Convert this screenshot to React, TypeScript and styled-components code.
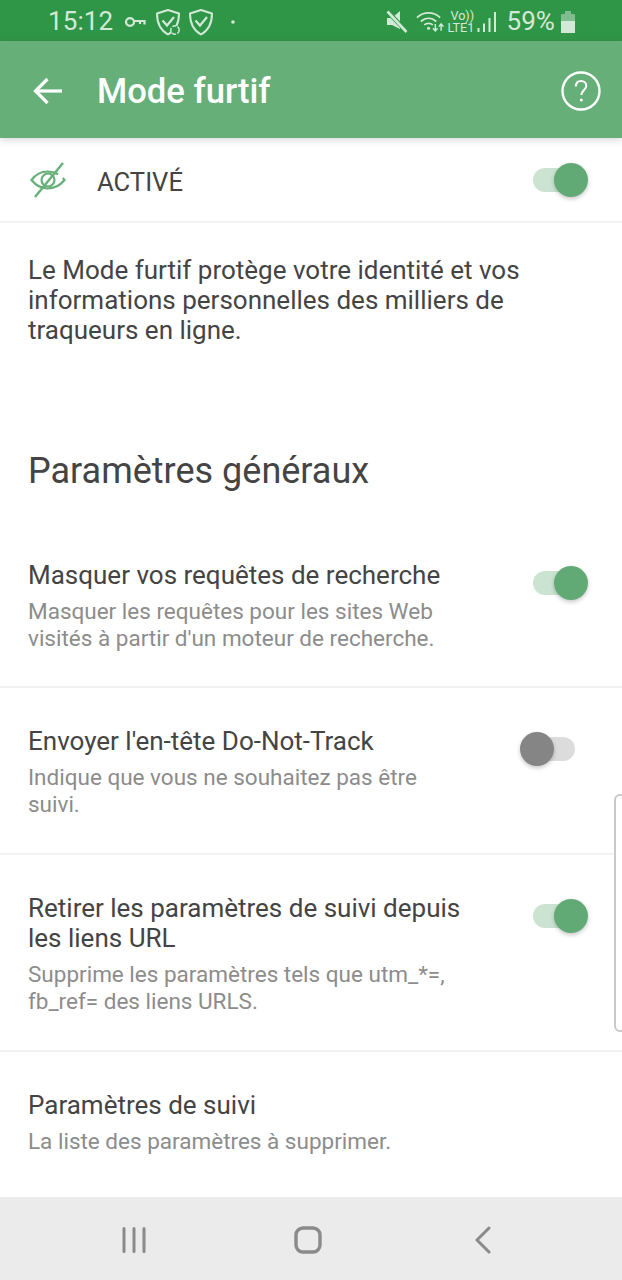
import React from "react";
import styled, { createGlobalStyle } from "styled-components";

const Global = createGlobalStyle`
  html, body { margin: 0; padding: 0; background: #fff; }
  * { box-sizing: border-box; }
  #root { width: 622px; height: 1280px; overflow: hidden; }
`;

const Screen = styled.div`
  position: relative;
  width: 622px;
  height: 1280px;
  display: flex;
  flex-direction: column;
  background: #fff;
  font-family: Roboto, "Liberation Sans", sans-serif;
  overflow: hidden;
`;

const StatusBar = styled.div`
  height: 41px;
  flex: none;
  background: #309647;
  color: #d3e9d7;
  display: flex;
  align-items: center;
  padding: 2px 47px 0 48px;
`;

const StatusText = styled.span`
  font-size: 26px;
  line-height: 39px;
  letter-spacing: 0.1px;
  height: 39px;
`;

const StatusGroup = styled.div`
  display: flex;
  align-items: center;
`;

const Spacer = styled.div`
  flex: 1;
`;

const Icon = styled.svg<{ $ml?: number; $mr?: number }>`
  flex: none;
  margin-left: ${(p) => p.$ml ?? 0}px;
  margin-right: ${(p) => p.$mr ?? 0}px;
`;

const AppBar = styled.div`
  height: 97px;
  flex: none;
  background: #67af79;
  display: flex;
  align-items: center;
  padding: 2px 21px 0 33px;
  box-shadow: 0 2px 8px rgba(0, 0, 0, 0.16);
  position: relative;
  z-index: 1;
`;

const Title = styled.h1`
  margin: 0 0 0 34px;
  font-size: 34.6px;
  font-weight: 500;
  color: #fff;
  flex: 1;
`;

const Content = styled.div`
  flex: 1;
  min-height: 0;
`;

const MasterRow = styled.div`
  height: 85px;
  display: flex;
  align-items: center;
  padding: 0 34px 0 30px;
  border-bottom: 2px solid #f2f2f2;
`;

const MasterLabel = styled.span`
  margin: 4px 0 0 31px;
  font-size: 25.6px;
  color: #444;
  flex: 1;
`;

const Intro = styled.p`
  margin: 0;
  padding: 32px 28px 0;
  font-size: 26px;
  line-height: 30px;
  color: #444;
`;

const SectionTitle = styled.h2`
  margin: 104px 0 29px;
  padding: 0 28px;
  font-size: 36px;
  line-height: 44px;
  font-weight: 400;
  color: #444;
`;

const Item = styled.div<{ $last?: boolean; $minH: number }>`
  display: flex;
  align-items: flex-start;
  min-height: ${(p) => p.$minH}px;
  padding: 38px 34px 0 28px;
  border-bottom: ${(p) => (p.$last ? "none" : "2px solid #f2f2f2")};
`;

const ItemBody = styled.div`
  flex: 1;
  min-width: 0;
  max-width: 460px;
`;

const ItemTitle = styled.div`
  font-size: 26px;
  line-height: 30px;
  color: #444;
`;

const ItemSub = styled.div`
  margin-top: 8px;
  font-size: 22.5px;
  line-height: 26.5px;
  color: #8c8c8c;
`;

const SwitchBox = styled.div`
  margin-left: auto;
  flex: none;
  position: relative;
  width: 55px;
  height: 34px;
  margin-top: 6px;
`;

const MasterSwitch = styled(SwitchBox)`
  margin-top: 0;
`;

const Track = styled.div<{ $on: boolean }>`
  position: absolute;
  top: 5px;
  left: 0;
  height: 24px;
  width: 42px;
  border-radius: 12px;
  background: ${(p) => (p.$on ? "#cbe4d1" : "#dcdcdc")};
`;

const Thumb = styled.div<{ $on: boolean }>`
  position: absolute;
  top: 0;
  left: ${(p) => (p.$on ? 21 : -13)}px;
  width: 34px;
  height: 34px;
  border-radius: 50%;
  background: ${(p) => (p.$on ? "#61aa75" : "#858585")};
  box-shadow: 0 2px 4px rgba(0, 0, 0, 0.22);
`;

const NavBar = styled.div`
  height: 83px;
  flex: none;
  background: #ebebeb;
  display: flex;
  align-items: center;
  padding: 2px 0 0 121px;
`;

const EdgeHandle = styled.div`
  position: absolute;
  right: -4px;
  top: 794px;
  width: 12px;
  height: 238px;
  border: 2px solid #c9c9c9;
  border-radius: 9px;
  background: #fff;
`;

const VolteBox = styled.div`
  margin-left: 3px;
  width: 26px;
  color: #d3e9d7;
  font-size: 12.6px;
  line-height: 12px;
  white-space: nowrap;
`;

const VolteLine = styled.div<{ $pad?: number }>`
  padding-left: ${(p) => p.$pad ?? 0}px;
`;

const Toggle = ({ on }: { on: boolean }) => (
  <SwitchBox>
    <Track $on={on} />
    <Thumb $on={on} />
  </SwitchBox>
);

const Key = () => (
  <Icon $ml={12} width="21" height="12" viewBox="0 0 21 12" fill="none" stroke="#d3e9d7" strokeWidth="2.200">
    <ellipse cx="5" cy="6" rx="4" ry="3.800" />
    <path d="M9 5h10.5v3.5M15 5v3" />
  </Icon>
);

const Shield = ({ sync, ml }: { sync?: boolean; ml: number }) => (
  <Icon $ml={ml} width="26" height="28" viewBox="0 0 26 28" fill="none" stroke="#d3e9d7" strokeWidth="2">
    <path d="M13 2 L24 5.5 C24 15 21 22 13 26.5 C5 22 2 15 2 5.5 Z" strokeLinejoin="round" />
    <path d="M7.5 12.5 L12 17.5 L19 9" strokeWidth="2.2" />
    {sync && <circle cx="20" cy="22" r="4.2" fill="#309647" strokeWidth="1.5" strokeDasharray="4 1.5" />}
  </Icon>
);

const Mute = () => (
  <Icon width="22" height="24" viewBox="0 0 22 24">
    <path d="M1 8h5L14 1V19L6 15H1Z" fill="#d3e9d7" />
    <path d="M2 2 L21 22" stroke="#309647" strokeWidth="4.500" />
    <path d="M1.500 1.500 L20.500 22" stroke="#d3e9d7" strokeWidth="2.600" />
  </Icon>
);

const Wifi = () => (
  <Icon $ml={8} width="28" height="24" viewBox="0 0 29 24" fill="none" stroke="#d3e9d7" strokeWidth="1.8">
    <path d="M1 7.5C8 1 18 1 25 7.5" />
    <path d="M5 11.5C10 7 16 7 21 11.5" />
    <path d="M8.5 15C11 13 15 13 17.500 15" />
    <circle cx="13" cy="18.500" r="1.6" fill="#d3e9d7" stroke="none" />
    <path d="M20 14v7M17.600 18.500l2.400 2.800 2.400-2.800M26 21v-7M23.600 16.800l2.400-2.800 2.400 2.800" strokeWidth="1.5" />
  </Icon>
);

const Signal = () => (
  <Icon $ml={4} $mr={9} width="20" height="22" viewBox="0 0 20 22" fill="#d3e9d7">
    <rect x="0.500" y="17" width="2" height="4" />
    <rect x="6" y="12.500" width="2" height="8.500" />
    <rect x="11.500" y="7" width="2" height="14" />
    <rect x="17" y="1" width="2" height="20" />
  </Icon>
);

const Battery = () => (
  <Icon $ml={6} width="14" height="22" viewBox="0 0 14 22">
    <rect x="4" y="0" width="6" height="3" fill="#7fbd8e" />
    <rect x="0" y="3" width="14" height="8" fill="#7fbd8e" />
    <rect x="0" y="10" width="14" height="12" fill="#d3e9d7" />
  </Icon>
);

const BackArrow = () => (
  <Icon width="30" height="28" viewBox="0 0 30 28" fill="none" stroke="#fff" strokeWidth="3.2">
    <path d="M29 14H3" />
    <path d="M14.500 2 L2.500 14 L14.500 26" />
  </Icon>
);

const Help = () => (
  <Icon width="40" height="40" viewBox="0 0 40 40" fill="none">
    <circle cx="20" cy="20" r="18.500" stroke="#fff" strokeWidth="2.400" />
    <path d="M14.800 15.500 C15 11.500 17.500 10 20 10 C23 10 25.300 12 25.300 14.800 C25.300 19 20.300 19.500 20.300 24" stroke="#fff" strokeWidth="2" />
    <circle cx="20.300" cy="29" r="1.500" fill="#fff" />
  </Icon>
);

const EyeOff = () => (
  <Icon width="36" height="36" viewBox="0 0 36 36" fill="none" stroke="#67af79" strokeWidth="2.200">
    <path d="M1.500 18 C6 12 11 9.500 17.500 9.500 C24 9.500 30 12 34.500 18 C30 23.500 24 26.500 17.500 26.500 C11 26.500 6 23.500 1.500 18 Z" strokeDasharray="30 6 60" />
    <circle cx="18" cy="18" r="6.500" />
    <path d="M33 1 L5 35" strokeWidth="2.400" />
  </Icon>
);

const NavRecents = () => (
  <Icon width="26" height="28" viewBox="0 0 26 28" stroke="#8a8a8a" strokeWidth="3" strokeLinecap="round">
    <path d="M3 2.500V25.500M13 2.500V25.500M23 2.500V25.500" />
  </Icon>
);

const NavHome = () => (
  <Icon $ml={147} width="28" height="28" viewBox="0 0 28 28" fill="none" stroke="#8a8a8a" strokeWidth="3.400">
    <rect x="2" y="2" width="24" height="24" rx="7" />
  </Icon>
);

const NavBack = () => (
  <Icon $ml={152} width="18" height="28" viewBox="0 0 18 28" fill="none" stroke="#8a8a8a" strokeWidth="3" strokeLinecap="round" strokeLinejoin="round">
    <path d="M15 2 L3 14 L15 26" />
  </Icon>
);

export default function App() {
  return (
    <Screen>
      <Global />
      <StatusBar>
        <StatusGroup>
          <StatusText>15:12</StatusText>
          <Key />
          <Shield sync ml={9} />
          <Shield ml={7} />
          <Icon $ml={17} width="4" height="4" viewBox="0 0 4 4">
            <circle cx="2" cy="2" r="1.800" fill="#d3e9d7" />
          </Icon>
        </StatusGroup>
        <Spacer />
        <StatusGroup>
          <Mute />
          <Wifi />
          <VolteBox>
            <VolteLine $pad={3}>Vo))</VolteLine>
            <VolteLine>LTE1</VolteLine>
          </VolteBox>
          <Signal />
          <StatusText>59%</StatusText>
          <Battery />
        </StatusGroup>
      </StatusBar>
      <AppBar>
        <BackArrow />
        <Title>Mode furtif</Title>
        <Help />
      </AppBar>
      <Content>
        <MasterRow>
          <EyeOff />
          <MasterLabel>ACTIVÉ</MasterLabel>
          <MasterSwitch>
            <Track $on />
            <Thumb $on />
          </MasterSwitch>
        </MasterRow>
        <Intro>
          Le Mode furtif protège votre identité et vos
          <br />
          informations personnelles des milliers de
          <br />
          traqueurs en ligne.
        </Intro>
        <SectionTitle>Paramètres généraux</SectionTitle>
        <Item $minH={166}>
          <ItemBody>
            <ItemTitle>Masquer vos requêtes de recherche</ItemTitle>
            <ItemSub>
              Masquer les requêtes pour les sites Web
              <br />
              visités à partir d'un moteur de recherche.
            </ItemSub>
          </ItemBody>
          <Toggle on />
        </Item>
        <Item $minH={167}>
          <ItemBody>
            <ItemTitle>Envoyer l'en-tête Do-Not-Track</ItemTitle>
            <ItemSub>
              Indique que vous ne souhaitez pas être
              <br />
              suivi.
            </ItemSub>
          </ItemBody>
          <Toggle on={false} />
        </Item>
        <Item $minH={197}>
          <ItemBody>
            <ItemTitle>
              Retirer les paramètres de suivi depuis
              <br />
              les liens URL
            </ItemTitle>
            <ItemSub>
              Supprime les paramètres tels que utm_*=,
              <br />
              fb_ref= des liens URLS.
            </ItemSub>
          </ItemBody>
          <Toggle on />
        </Item>
        <Item $last $minH={140}>
          <ItemBody>
            <ItemTitle>Paramètres de suivi</ItemTitle>
            <ItemSub>La liste des paramètres à supprimer.</ItemSub>
          </ItemBody>
        </Item>
      </Content>
      <NavBar>
        <NavRecents />
        <NavHome />
        <NavBack />
      </NavBar>
      <EdgeHandle />
    </Screen>
  );
}
